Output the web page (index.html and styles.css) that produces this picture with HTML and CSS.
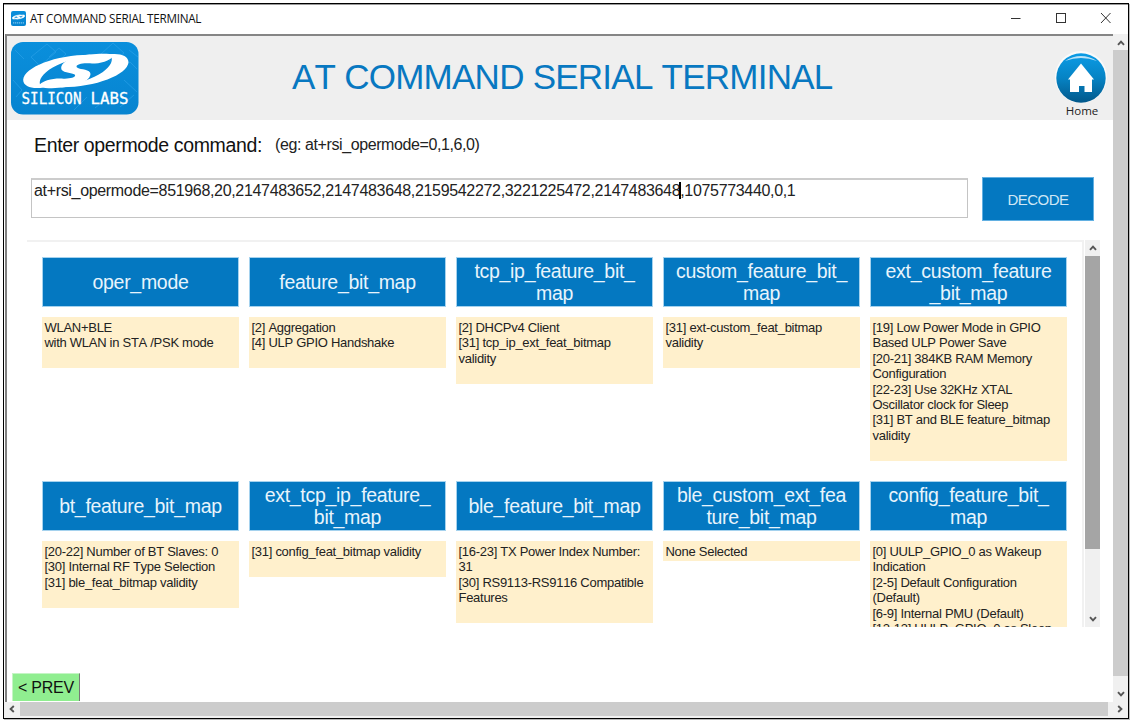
FILE: index.html
```html
<!DOCTYPE html>
<html lang="en">
<head>
<meta charset="utf-8">
<title>AT COMMAND SERIAL TERMINAL</title>
<link rel="stylesheet" href="styles.css">
</head>
<body>
<svg class="defs" width="0" height="0">
  <defs>
    <linearGradient id="blue" x1="0" y1="0" x2="0" y2="1"><stop offset="0" stop-color="#0a8fdc"/><stop offset="1" stop-color="#0784d0"/></linearGradient>
    <linearGradient id="ball" x1="0" y1="0" x2="0" y2="1"><stop offset="0" stop-color="#0b9ce6"/><stop offset=".5" stop-color="#0683c4"/><stop offset="1" stop-color="#02588a"/></linearGradient>
    <symbol id="swirl" viewBox="66 158 320 108">
      <path id="arm" d="M272 163C170 162 72 200 69 238C69 258 95 266 125 262C105 240 130 192 272 163Z"/>
      <use href="#arm" transform="rotate(180 227 212)"/>
      <path d="M110 261C128 237 165 233 190 235C215 236 232 228 222 222C212 216 183 218 183 203C185 165 300 155 344 163C326 187 289 191 264 189C239 188 222 196 232 202C242 208 271 206 271 221C269 259 154 269 110 261Z"/>
    </symbol>
    <symbol id="up" viewBox="0 0 8 6"><path d="M1 4.8L4 1.6L7 4.8" fill="none" stroke="#555" stroke-width="1.9"/></symbol>
  </defs>
</svg>
<div class="window">
  <div class="titlebar">
    <svg class="app-icon" width="15" height="15" viewBox="0 0 15 15"><rect width="15" height="15" rx="2" fill="url(#blue)"/><use href="#swirl" x="1" y="2.500" width="13" height="7" fill="#fff" stroke="#fff" stroke-width="10"/><path d="M2 11.8H13" stroke="#7cc4ee" stroke-width="1.3" stroke-dasharray="1.3 .7"/></svg>
    <span class="title-text">AT COMMAND SERIAL TERMINAL</span>
    <svg class="controls" width="104" height="14" viewBox="0 0 104 14" fill="none" stroke="#333"><path d="M0 7.5H9.500"/><rect x="45.500" y="2.500" width="9" height="9"/><path d="M90 2L99.500 12M99.500 2L90 12"/></svg>
  </div>
  <div class="view">
    <div class="page">
      <header class="header">
        <svg class="logo" width="128" height="73" viewBox="0 0 128 73">
          <rect width="127.500" height="72.500" rx="12" fill="url(#blue)"/>
          <g fill="none" stroke="#2ba2e8" stroke-width="1" opacity=".65"><path d="M20 15L36 2L45 10L29 24ZM38 15L48 6L55 12L46 22M90 12L102 1L113 11L101 20ZM107 29L119 20L126 27M2 38L11 48L5 55M4 8L13 17M113 38L126 50M84 66L100 53M63 68L76 55M109 65L123 53M35 63L52 49M118 8L127 15"/></g>
          <use href="#swirl" x="11" y="11" width="107" height="36" fill="#fff"/>
          <text class="logo-text" x="10.500" y="62" textLength="60" lengthAdjust="spacingAndGlyphs">SILICON</text>
          <text class="logo-text" x="79.500" y="62" textLength="38" lengthAdjust="spacingAndGlyphs">LABS</text>
        </svg>
        <h1 class="headline">AT COMMAND SERIAL TERMINAL</h1>
        <div class="home">
          <svg width="52" height="54" viewBox="0 0 52 54"><circle cx="26" cy="27" r="26" fill="#fafafa"/><circle cx="26" cy="28" r="24.700" fill="url(#ball)"/><path d="M10 11Q26 1 42 11Q26 5 10 11Z" fill="#b9e2f8"/><path d="M26 13.500L39 29.500H37V42H29.500V36H24V42H15V29.500H13Z" fill="#fff"/></svg>
          <span class="home-text">Home</span>
        </div>
      </header>
      <div class="prompt"><label class="prompt-label">Enter opermode command:</label><span class="hint">(eg: at+rsi_opermode=0,1,6,0)</span></div>
      <div class="entry-row">
        <div class="entry">at+rsi_opermode=851968,20,2147483652,2147483648,2159542272,3221225472,2147483648<i class="caret"></i>,1075773440,0,1</div>
        <button class="decode">DECODE</button>
      </div>
      <div class="results">
        <div class="grid">
          <section class="card"><h2>oper_mode</h2><p>WLAN+BLE<br>with WLAN in STA /PSK mode<br>&nbsp;</p></section>
          <section class="card"><h2>feature_bit_map</h2><p>[2] Aggregation<br>[4] ULP GPIO Handshake<br>&nbsp;</p></section>
          <section class="card"><h2>tcp_ip_feature_bit_<br>map</h2><p>[2] DHCPv4 Client<br>[31] tcp_ip_ext_feat_bitmap<br>validity<br>&nbsp;</p></section>
          <section class="card"><h2>custom_feature_bit_<br>map</h2><p>[31] ext-custom_feat_bitmap<br>validity<br>&nbsp;</p></section>
          <section class="card"><h2>ext_custom_feature<br>_bit_map</h2><p>[19] Low Power Mode in GPIO<br>Based ULP Power Save<br>[20-21] 384KB RAM Memory<br>Configuration<br>[22-23] Use 32KHz XTAL<br>Oscillator clock for Sleep<br>[31] BT and BLE feature_bitmap<br>validity<br>&nbsp;</p></section>
          <section class="card"><h2>bt_feature_bit_map</h2><p>[20-22] Number of BT Slaves: 0<br>[30] Internal RF Type Selection<br>[31] ble_feat_bitmap validity<br>&nbsp;</p></section>
          <section class="card"><h2>ext_tcp_ip_feature_<br>bit_map</h2><p>[31] config_feat_bitmap validity<br>&nbsp;</p></section>
          <section class="card"><h2>ble_feature_bit_map</h2><p>[16-23] TX Power Index Number:<br>31<br>[30] RS9113-RS9116 Compatible<br>Features<br>&nbsp;</p></section>
          <section class="card"><h2>ble_custom_ext_fea<br>ture_bit_map</h2><p>None Selected</p></section>
          <section class="card"><h2>config_feature_bit_<br>map</h2><p>[0] UULP_GPIO_0 as Wakeup<br>Indication<br>[2-5] Default Configuration<br>(Default)<br>[6-9] Internal PMU (Default)<br>[12-13] UULP_GPIO_0 as Sleep</p></section>
        </div>
        <div class="scroll inner">
          <svg width="8" height="6"><use href="#up"/></svg>
          <div class="thumb"></div>
          <svg class="down" width="8" height="6"><use href="#up"/></svg>
        </div>
      </div>
      <button class="prev">&lt; PREV</button>
    </div>
    <div class="scroll outer">
      <svg width="8" height="6"><use href="#up"/></svg>
      <div class="thumb"></div>
      <svg class="down" width="8" height="6"><use href="#up"/></svg>
    </div>
  </div>
  <div class="hscroll">
    <svg class="left" width="8" height="6"><use href="#up"/></svg>
    <div class="thumb"></div>
    <svg class="right" width="8" height="6"><use href="#up"/></svg>
  </div>
</div>
</body>
</html>
```
FILE: styles.css
```css
* { box-sizing: border-box; }
body { margin: 0; padding: 3px; width: 1133px; height: 723px; overflow: hidden; background: #fff; font-family: "Liberation Sans", Arial, sans-serif; color: #222; font-kerning: none; }
svg { display: block; flex: none; }
.defs { position: absolute; }
button { font: inherit; border: 0; padding: 0; }
.window { width: 1126px; height: 716px; border: 1px solid #000; box-shadow: inset 0 1px #999, 1px 1px #bbb; display: flex; flex-direction: column; }
.titlebar { height: 30px; flex: none; display: flex; align-items: center; padding: 0 13px 2px 7px; }
.title-text { margin-left: 4px; flex: 1; font: 11.700px/16px "Open Sans", sans-serif; letter-spacing: -.27px; color: #111; white-space: nowrap; }
.view { height: 668px; flex: none; display: flex; }
.page { width: 1108px; border-top: 2px solid #858585; border-left: 2px solid #808080; margin-left: 1px; display: flex; flex-direction: column; align-items: flex-start; }
.header { width: 100%; height: 84px; flex: none; background: #efefef; display: flex; align-items: flex-start; padding: 6px 5px 0 4px; }
.headline { margin: 15px 0 0; flex: 1; padding-left: 153px; font-size: 35px; letter-spacing: -.75px; line-height: 40px; font-weight: 400; color: #0878c1; white-space: nowrap; }
.logo-text { font: 16.500px "DejaVu Sans Mono", monospace; fill: #fff; stroke: #fff; stroke-width: .3px; }
.home { width: 54px; margin-top: 8px; display: flex; flex-direction: column; align-items: center; }
.home-text { font: 11.500px/14px "Open Sans", sans-serif; color: #222; padding-left: 2px; }
.prompt { display: flex; align-items: center; height: 24px; margin: 13px 0 0 27px; white-space: nowrap; }
.prompt-label { font-size: 19.500px; letter-spacing: -.36px; color: #111; }
.hint { font-size: 16px; letter-spacing: -.4px; margin-left: 13px; }
.entry-row { display: flex; align-items: flex-start; margin: 20px 0 0 24px; }
.entry { width: 937px; height: 40px; margin-top: 1px; border: 1px solid #c4c4c4; border-top: 2px solid #ccc; padding: 1px 2px 0; font-size: 16px; letter-spacing: -.33px; line-height: 20px; white-space: nowrap; }
.caret { display: inline-block; width: 2px; height: 17px; margin: 0 -1px; vertical-align: -3px; background: #000; }
.decode { width: 112px; height: 44px; margin-left: 14px; background: #0478c1; border: 1px solid #62b0e2; color: #d0e7f5; font-size: 15px; letter-spacing: -.5px; }
.results { display: flex; width: 1074px; height: 387px; margin: 19px 0 0 20px; overflow: hidden; flex: none; }
.grid { width: 1057px; height: 387px; overflow: hidden; flex: none; border-top: 2px solid #f1f1f1; border-right: 2px solid #f1f1f1; display: grid; grid-template-columns: repeat(5, 197px); grid-template-rows: 224px 224px; column-gap: 10px; padding: 15px 0 0 15px; align-items: start; }
.card h2 { margin: 0; height: 50px; padding-top: 1px; border: 1px solid #a5d2ee; background: #0478c1; color: #e8f4fc; font-size: 19.500px; letter-spacing: -.3px; line-height: 22px; font-weight: 400; text-align: center; display: flex; align-items: center; justify-content: center; padding-bottom: 1px; white-space: nowrap; }
.card p { margin: 10px 0 0; padding: 3px 2.500px 2px; background: #fff0cc; font-size: 13px; letter-spacing: -.28px; line-height: 15.400px; white-space: nowrap; }
.scroll { background: #f0f0f0; display: flex; flex-direction: column; align-items: center; }
.down { transform: rotate(180deg); }
.inner { width: 15px; margin-left: 1px; padding: 5px 0; }
.inner .thumb { width: 15px; height: 293px; background: #a5a5a5; margin-top: 5px; }
.inner .down { margin-top: auto; }
.outer { width: 15px; padding: 6px 0 5px; }
.outer .thumb { width: 15px; height: 626px; background: #ccc; margin-top: 4px; }
.outer .down { margin-top: auto; }
.prev { width: 68px; height: 28px; margin: auto 0 1px 5px; background: #90ee90; border-right: 1px solid #777; border-left: 1px solid #c5f5c5; border-top: 1px solid #c5f5c5; font-size: 16px; letter-spacing: -.2px; color: #111; white-space: nowrap; }
.hscroll { height: 16px; flex: none; display: flex; align-items: center; background: #f0f0f0; }
.hscroll .thumb { width: 1088px; height: 14px; background: #ccc; margin-left: 4px; margin-bottom: 2px; }
.left { transform: rotate(-90deg); margin: 0 0 2px 4px; }
.right { transform: rotate(90deg); margin: 0 0 2px 8px; }
```
